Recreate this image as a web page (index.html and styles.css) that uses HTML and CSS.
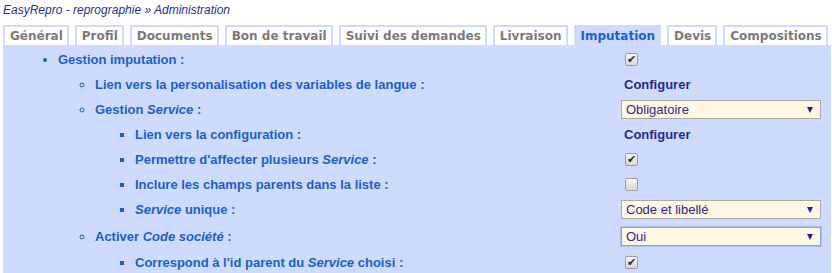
FILE: index.html
```html
<!DOCTYPE html>
<html lang="fr">
<head>
    <meta charset="UTF-8">
    <title>EasyRepro - Administration</title>
    <link rel="stylesheet" href="styles.css">
</head>
<body>
    <div class="crumb"><a href="#">EasyRepro - reprographie</a> &raquo; <a href="#">Administration</a></div>

    <ul class="tabs">
        <li>Général</li>
        <li>Profil</li>
        <li>Documents</li>
        <li>Bon de travail</li>
        <li>Suivi des demandes</li>
        <li>Livraison</li>
        <li class="active">Imputation</li>
        <li>Devis</li>
        <li>Compositions</li>
    </ul>

    <div class="panel">
        <div class="row">
            <div class="label lvl1">Gestion imputation :</div>
            <div class="value"><input type="checkbox" class="chk" checked></div>
        </div>
        <div class="row">
            <div class="label lvl2">Lien vers la personalisation des variables de langue :</div>
            <div class="value"><a href="#" class="link">Configurer</a></div>
        </div>
        <div class="row">
            <div class="label lvl2">Gestion <em>Service</em> :</div>
            <div class="value">
                <span class="pick"><select><option>Obligatoire</option></select></span>
            </div>
        </div>
        <div class="row">
            <div class="label lvl3">Lien vers la configuration :</div>
            <div class="value"><a href="#" class="link">Configurer</a></div>
        </div>
        <div class="row">
            <div class="label lvl3">Permettre d'affecter plusieurs <em>Service</em> :</div>
            <div class="value"><input type="checkbox" class="chk" checked></div>
        </div>
        <div class="row">
            <div class="label lvl3">Inclure les champs parents dans la liste :</div>
            <div class="value"><input type="checkbox" class="chk"></div>
        </div>
        <div class="row">
            <div class="label lvl3"><em>Service</em> unique :</div>
            <div class="value">
                <span class="pick"><select><option>Code et libellé</option></select></span>
            </div>
        </div>
        <div class="row tall">
            <div class="label lvl2">Activer <em>Code société</em> :</div>
            <div class="value">
                <span class="pick"><select class="focus"><option>Oui</option></select></span>
            </div>
        </div>
        <div class="row">
            <div class="label lvl3">Correspond à l'id parent du <em>Service</em> choisi :</div>
            <div class="value"><input type="checkbox" class="chk" checked></div>
        </div>
    </div>
</body>
</html>
```

FILE: styles.css
```css
body {
    margin: 0;
    padding: 0 1px 0 3px;
    font-family: "Liberation Sans", Arial, sans-serif;
    font-size: 13px;
    background: #fff;
}
.crumb {
    font-size: 12px;
    font-style: italic;
    color: #1f2f88;
    height: 18px;
    line-height: 18px;
    padding-top: 1px;
}
.crumb a {
    color: #1f2f88;
    text-decoration: none;
}
.tabs {
    list-style: none;
    margin: 6px 0 0 0;
    padding: 0;
    display: flex;
    gap: 6px;
}
.tabs li {
    font-family: "DejaVu Sans", Verdana, sans-serif;
    font-size: 12px;
    font-weight: bold;
    color: #7a7a7a;
    background: #fff;
    border: 2px solid #cfdbfd;
    border-bottom: 0;
    padding: 0 4px 0 5px;
    line-height: 18px;
    white-space: nowrap;
    flex-shrink: 0;
}
.tabs li.active {
    background: #cfdbfd;
    color: #1a60d0;
}
.panel {
    background: #cfdbfd;
    padding: 2px 10px 10px 0;
}
.row {
    display: grid;
    grid-template-columns: 1fr 200px;
    align-items: center;
    height: 25px;
}
.row.tall {
    height: 28px;
}
.label {
    font-weight: bold;
    color: #1b5fc8;
    display: list-item;
}
.lvl1 {
    margin-left: 55px;
    list-style-type: disc;
}
.lvl2 {
    margin-left: 92px;
    list-style-type: circle;
}
.lvl3 {
    margin-left: 132px;
    list-style-type: square;
}
.value {
    display: flex;
    align-items: center;
}
.link {
    font-weight: bold;
    color: #1d2d8c;
    text-decoration: none;
    padding-left: 3px;
}
.chk {
    appearance: none;
    -webkit-appearance: none;
    width: 13px;
    height: 13px;
    margin: 0 0 0 4px;
    border: 1px solid #9c9c9c;
    border-radius: 2px;
    background: linear-gradient(#f6f6f6, #d8d8d8);
    display: grid;
    place-content: center;
}
.chk:checked::after {
    content: "\2714";
    font-family: "DejaVu Sans", sans-serif;
    font-size: 11px;
    line-height: 11px;
    color: #2a2a2a;
}
.pick {
    position: relative;
    display: block;
    width: 200px;
}
.pick select {
    appearance: none;
    -webkit-appearance: none;
    width: 200px;
    height: 19px;
    margin: 0;
    padding: 0 0 0 4px;
    font-family: "Liberation Sans", Arial, sans-serif;
    font-size: 13px;
    color: #2c2a8e;
    background: #fff6e4;
    border: 1px solid #a9a9a9;
    border-radius: 0;
    display: block;
}
.pick select.focus {
    border-color: #7ea4ee;
    box-shadow: 0 0 0 1px #a9c2f4;
}
.pick::after {
    content: "";
    position: absolute;
    right: 8px;
    top: 7px;
    border-left: 3px solid transparent;
    border-right: 3px solid transparent;
    border-top: 6px solid #1a2a80;
}
```
